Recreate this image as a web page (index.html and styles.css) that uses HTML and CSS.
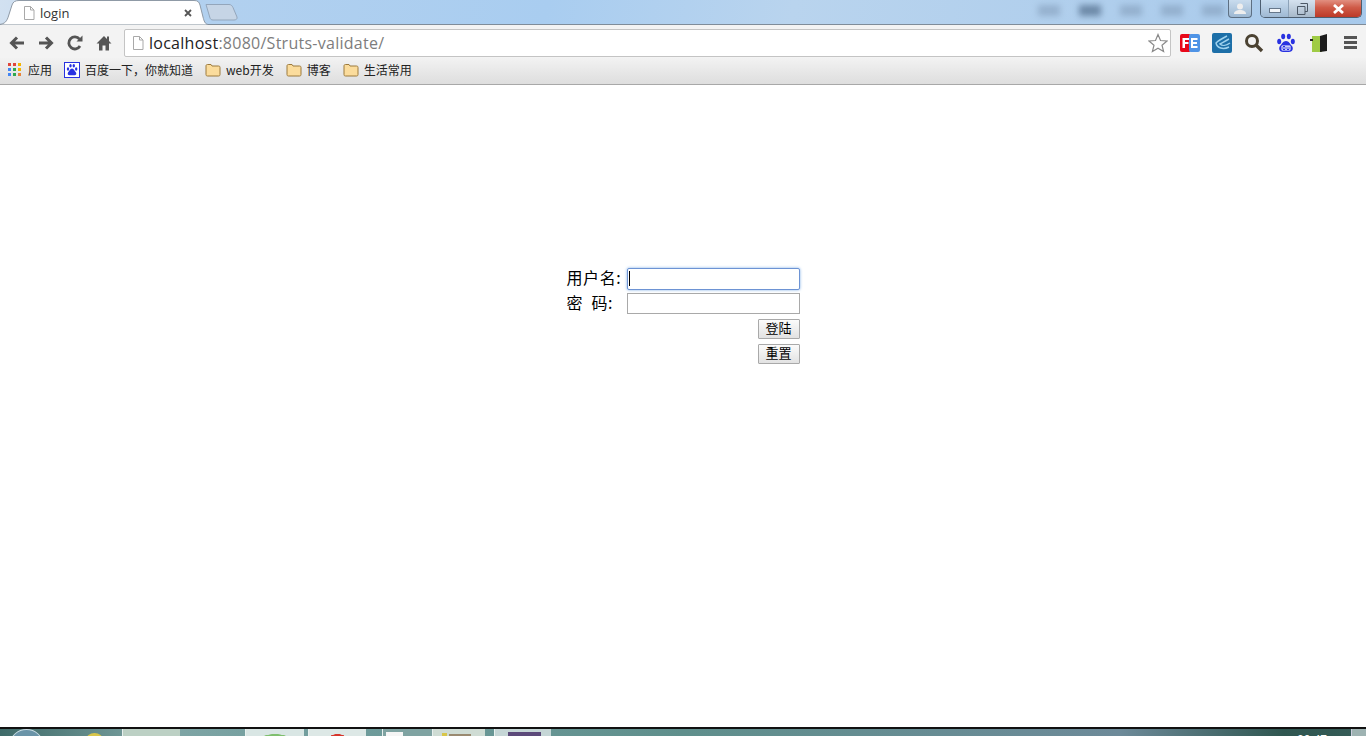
FILE: index.html
```html
<!DOCTYPE html>
<html lang="zh">
<head>
    <meta charset="UTF-8">
    <title>login</title>
    <link rel="stylesheet" href="styles.css">
</head>
<body>
    <div class="titlebar">
        <div class="tab">
            <svg class="tab-shape" width="209" height="25" viewBox="0 0 209 25">
                <path d="M0 24.5 C6 24 8 21 9.5 16 L13 5 C14 2 16 .5 20 .5 L195 .5 C199 .5 200 2 201 5 L204 17 C205 21 206 24 209 24.5" fill="#fff" stroke="#8f9aa6"/>
            </svg>
            <svg class="page-icon" width="12" height="14" viewBox="0 0 12 14">
                <path d="M1.5 .5 H7.5 L11 4 V13.5 H1.5 Z M7.5 .5 V4 H11" fill="#fff" stroke="#a9a9a9"/>
            </svg>
            <span class="tab-title">login</span>
            <svg class="tab-close" width="8" height="8" viewBox="0 0 8 8">
                <path d="M1 1 L7 7 M7 1 L1 7" stroke="#555" stroke-width="1.8"/>
            </svg>
        </div>
        <svg class="newtab" width="34" height="17" viewBox="0 0 34 17">
            <path d="M1 .5 H24 C26 .5 27 1.5 28 3.5 L32 13 C32.5 15 31 16 29 16 H8 C6 16 5.5 15 5 14 Z" fill="#c6d5e6" stroke="#94a6bb"/>
        </svg>
        <div class="blurred">
            <span class="blob"></span>
            <span class="blob dark"></span>
            <span class="blob"></span>
            <span class="blob"></span>
            <span class="blob"></span>
        </div>
        <div class="winbtn profile">
            <svg width="14" height="12" viewBox="0 0 14 12">
                <circle cx="7" cy="3.5" r="3" fill="#eee"/>
                <path d="M1 11 C1 8 4 7 7 7 C10 7 13 8 13 11 Z" fill="#eee"/>
            </svg>
        </div>
        <div class="winbtns">
            <div class="winbtn-part min"><span class="min-bar"></span></div>
            <div class="winbtn-part restore">
                <svg width="11" height="12" viewBox="0 0 11 12">
                    <path d="M3.5 .5 H10.5 V8.5 H8 M.5 3.5 H8 V11.5 H.5 Z" fill="none" stroke="#4c5866"/>
                </svg>
            </div>
            <div class="winbtn-part close">
                <svg width="13" height="10" viewBox="0 0 13 10">
                    <path d="M2 1 L11 9 M11 1 L2 9" stroke="#fff" stroke-width="2.8"/>
                </svg>
            </div>
        </div>
    </div>

    <div class="toolbar">
        <svg class="nav-icon" width="16" height="16" viewBox="0 0 16 16">
            <path d="M15 8 H3 M8 2.5 L2.5 8 L8 13.5" fill="none" stroke="#555" stroke-width="3"/>
        </svg>
        <svg class="nav-icon" width="16" height="16" viewBox="0 0 16 16">
            <path d="M1 8 H13 M8 2.5 L13.5 8 L8 13.5" fill="none" stroke="#555" stroke-width="3"/>
        </svg>
        <svg class="nav-icon" width="16" height="16" viewBox="0 0 16 16">
            <path d="M13 11 A6 6 0 1 1 12.5 4.2" fill="none" stroke="#555" stroke-width="2.8"/>
            <path d="M9.5 6.5 H15.5 V.5 Z" fill="#555"/>
        </svg>
        <svg class="nav-icon" width="16" height="16" viewBox="0 0 16 16">
            <path d="M8 1 L0.5 8.5 H3 V15.5 H6.5 V10.5 H9.5 V15.5 H13 V8.5 H15.5 L13 6 V1.5 H11 V4 Z" fill="#555"/>
        </svg>
        <div class="omnibox">
            <svg class="page-icon" width="12" height="14" viewBox="0 0 12 14">
                <path d="M1.5 .5 H7.5 L11 4 V13.5 H1.5 Z M7.5 .5 V4 H11" fill="#fff" stroke="#a9a9a9"/>
            </svg>
            <span class="url"><span class="host">localhost</span>:8080/Struts-validate/</span>
            <svg class="star" width="20" height="20" viewBox="0 0 20 20">
                <path d="M10 1.5 L12.5 7.5 L19 8 L14 12.2 L15.6 18.5 L10 15.2 L4.4 18.5 L6 12.2 L1 8 L7.5 7.5 Z" fill="#fff" stroke="#8a8a8a" stroke-width="1.2"/>
            </svg>
        </div>
        <div class="extensions">
            <svg width="20" height="20" viewBox="0 0 20 20">
                <rect x="0" y="1" width="11" height="18" rx="2" fill="#e8081a"/>
                <rect x="9" y="1" width="11" height="18" rx="2" fill="#4f94e6"/>
                <path d="M2.5 5 H9 V7 H5 V9 H8.5 V11 H5 V15 H2.5 Z M11 5 H17.5 V7 H13 V9 H17 V11 H13 V13 H17.5 V15 H11 Z" fill="#fff"/>
            </svg>
            <svg width="20" height="20" viewBox="0 0 20 20">
                <rect width="20" height="20" y="0" rx="2" fill="#1d6fa8"/>
                <path d="M15 3 C11 5 6 8 4 10 C5 15 11 17 17 14 M17 6 C13 8 10 10 8 11 C10 13 14 13 18 10" fill="none" stroke="#9fd2ee" stroke-width="1.4"/>
            </svg>
            <svg width="20" height="20" viewBox="0 0 20 20">
                <circle cx="8" cy="8" r="5.5" fill="none" stroke="#4b4232" stroke-width="3"/>
                <path d="M12 12 L18 18" stroke="#4b4232" stroke-width="3.4"/>
            </svg>
            <svg width="20" height="20" viewBox="0 0 20 20">
                <ellipse cx="3.2" cy="8.5" rx="2" ry="2.8" fill="#2932e1"/>
                <ellipse cx="7.2" cy="3.5" rx="2" ry="2.8" fill="#2932e1"/>
                <ellipse cx="12.8" cy="3.5" rx="2" ry="2.8" fill="#2932e1"/>
                <ellipse cx="16.8" cy="8.5" rx="2" ry="2.8" fill="#2932e1"/>
                <path d="M10 8 C13 8 14 11 16 13 C18 16 16 19 13 19 H7 C4 19 2 16 4 13 C6 11 7 8 10 8 Z" fill="#2932e1"/>
                <rect x="5.5" y="12.5" width="9" height="5" rx="1" fill="#fff"/>
                <path d="M7 13.5 H9 V16.5 H7 Z M11 13.5 V16.5 H13 V13.5" fill="none" stroke="#2932e1"/>
            </svg>
            <svg width="20" height="20" viewBox="0 0 20 20">
                <rect x="4" y="3" width="10" height="16" fill="#9fcb45"/>
                <path d="M12 3 L19 1 V18 L12 19 Z" fill="#1b1b1b"/>
                <rect x="2" y="6" width="3" height="2" fill="#222"/>
            </svg>
        </div>
        <div class="menu">
            <span></span><span></span><span></span>
        </div>
    </div>

    <div class="bookmarks">
        <div class="bm">
            <span class="apps">
                <i class="c1"></i><i class="c2"></i><i class="c3"></i>
                <i class="c4"></i><i class="c5"></i><i class="c6"></i>
                <i class="c7"></i><i class="c8"></i><i class="c9"></i>
            </span>
            应用
        </div>
        <div class="bm">
            <svg width="16" height="16" viewBox="0 0 16 16">
                <rect x=".5" y=".5" width="15" height="15" fill="#fff" stroke="#2932e1"/>
                <ellipse cx="4" cy="7" rx="1.2" ry="1.7" fill="#2932e1"/>
                <ellipse cx="6.5" cy="3.8" rx="1.2" ry="1.7" fill="#2932e1"/>
                <ellipse cx="9.8" cy="3.8" rx="1.2" ry="1.7" fill="#2932e1"/>
                <ellipse cx="12.2" cy="7" rx="1.2" ry="1.7" fill="#2932e1"/>
                <path d="M8 6.5 C10 6.5 10.5 9 12 10.5 C13 12.5 11.5 13.5 10 13.2 H6 C4.5 13.5 3 12.5 4 10.5 C5.5 9 6 6.5 8 6.5 Z" fill="#2932e1"/>
            </svg>
            百度一下，你就知道
        </div>
        <div class="bm">
            <svg class="folder" width="16" height="14" viewBox="0 0 16 14">
                <path d="M1 3 C1 2 1.5 1.5 2.5 1.5 H6 L7 3 H13.5 C14.5 3 15 3.5 15 4.5 V11.5 C15 12.5 14.5 13 13.5 13 H2.5 C1.5 13 1 12.5 1 11.5 Z" fill="#fbdc9c" stroke="#9c7a3c"/>
            </svg>
            web开发
        </div>
        <div class="bm">
            <svg class="folder" width="16" height="14" viewBox="0 0 16 14">
                <path d="M1 3 C1 2 1.5 1.5 2.5 1.5 H6 L7 3 H13.5 C14.5 3 15 3.5 15 4.5 V11.5 C15 12.5 14.5 13 13.5 13 H2.5 C1.5 13 1 12.5 1 11.5 Z" fill="#fbdc9c" stroke="#9c7a3c"/>
            </svg>
            博客
        </div>
        <div class="bm">
            <svg class="folder" width="16" height="14" viewBox="0 0 16 14">
                <path d="M1 3 C1 2 1.5 1.5 2.5 1.5 H6 L7 3 H13.5 C14.5 3 15 3.5 15 4.5 V11.5 C15 12.5 14.5 13 13.5 13 H2.5 C1.5 13 1 12.5 1 11.5 Z" fill="#fbdc9c" stroke="#9c7a3c"/>
            </svg>
            生活常用
        </div>
    </div>

    <div class="page">
        <form class="login-form">
            <table>
                <tr>
                    <td class="label">用户名:</td>
                    <td class="cell"><input type="text" class="field focused"><span class="caret"></span></td>
                </tr>
                <tr>
                    <td class="label">密&nbsp;&nbsp;码:</td>
                    <td class="cell"><input type="text" class="field"></td>
                </tr>
                <tr>
                    <td></td>
                    <td class="cell"><button type="submit">登陆</button></td>
                </tr>
                <tr>
                    <td></td>
                    <td class="cell"><button type="reset">重置</button></td>
                </tr>
            </table>
        </form>
    </div>

    <div class="taskbar">
        <span class="orb"></span>
        <span class="pin"></span>
        <span class="task t1"></span>
        <span class="task t2"></span>
        <span class="task t3"></span>
        <span class="task t4"></span>
        <span class="task t5"></span>
        <span class="task t6"></span>
        <span class="clock">20:47</span>
        <span class="show-desktop"></span>
    </div>
</body>
</html>
```

FILE: styles.css
```css
html, body {
    margin: 0;
    padding: 0;
    height: 100%;
}

body {
    display: flex;
    flex-direction: column;
    height: 736px;
    overflow: hidden;
    background-color: #fff;
    font-family: "Noto Sans CJK SC", "Noto Sans", sans-serif;
}

/* window title */
.titlebar {
    position: relative;
    z-index: 1;
    display: flex;
    align-items: flex-start;
    height: 25px;
    flex: none;
    box-sizing: border-box;
    background: linear-gradient(100deg, #d2e1f1 0, #b3d1ef 12%, #a9cdf0 40%, #b9d4ee 58%, #a7c9eb 100%);
    border-bottom: 1px solid #7f8c99;
}

.tab {
    position: relative;
    display: flex;
    align-items: center;
    flex: none;
    width: 205px;
    height: 25px;
    padding-left: 23px;
    box-sizing: border-box;
}

.tab-shape {
    position: absolute;
    left: -1px;
    top: 0;
}

.tab .page-icon,
.tab-title,
.tab-close {
    position: relative;
}

.tab-title {
    margin-left: 5px;
    font-family: "Open Sans", sans-serif;
    font-size: 13px;
    color: #333;
}

.tab-close {
    margin-left: auto;
    margin-right: 13px;
}

.newtab {
    flex: none;
    margin: 4px 0 0 0;
}

.blurred {
    display: flex;
    gap: 19px;
    margin: 5px 0 0 auto;
}

.blob {
    width: 22px;
    height: 11px;
    background-color: #7f99b6;
    opacity: .55;
    filter: blur(3px);
}

.blob.dark {
    background-color: #5c7896;
    opacity: .8;
}

.winbtn {
    display: flex;
    align-items: center;
    justify-content: center;
    box-sizing: border-box;
    flex: none;
    width: 24px;
    height: 18px;
    margin-left: 4px;
    background: linear-gradient(#c9dcee, #9db8d2);
    border: 1px solid #5d6f82;
    border-top: 0;
    border-radius: 0 0 4px 4px;
}

.winbtns {
    display: flex;
    flex: none;
    height: 18px;
    margin: 0 4px 0 8px;
    border: 1px solid #4d5e70;
    border-top: 0;
    border-radius: 0 0 5px 5px;
    overflow: hidden;
    box-sizing: border-box;
    width: 102px;
}

.winbtn-part {
    display: flex;
    align-items: center;
    justify-content: center;
    height: 100%;
}

.min {
    width: 28px;
    background: linear-gradient(#c8dcef, #9fb9d3);
    border-right: 1px solid #8da3b9;
    box-sizing: border-box;
}

.min-bar {
    width: 12px;
    height: 5px;
    margin-top: 4px;
    background-color: #f1f5f9;
    border: 1px solid #66778a;
    box-sizing: border-box;
}

.restore {
    width: 26px;
    background: linear-gradient(#d5e2ef, #a8b9ca);
}

.close {
    flex: 1;
    background: linear-gradient(#e28f80 0, #cf5a47 45%, #bc3a28 100%);
}

/* toolbar */
.toolbar {
    display: flex;
    align-items: center;
    flex: none;
    height: 33px;
    padding: 2px 0 0 9px;
    background-color: #f3f3f3;
    box-sizing: border-box;
}

.nav-icon {
    flex: none;
    margin-right: 13px;
}

.omnibox {
    display: flex;
    align-items: center;
    box-sizing: border-box;
    flex: none;
    width: 1047px;
    height: 28px;
    margin-left: -1px;
    padding: 0 2px 0 7px;
    background-color: #fff;
    border: 1px solid #c4c4c4;
    border-radius: 2px;
}

.url {
    margin-left: 5px;
    font-family: "Open Sans", sans-serif;
    font-size: 16px;
    letter-spacing: .26px;
    color: #7d7d7d;
}

.host {
    color: #222;
}

.star {
    margin-left: auto;
}

.extensions {
    display: flex;
    gap: 12px;
    margin-left: 9px;
}

.menu {
    display: flex;
    flex-direction: column;
    gap: 2px;
    margin-left: 16px;
}

.menu span {
    display: block;
    width: 13px;
    height: 3px;
    background-color: #555;
}

/* bookmarks */
.bookmarks {
    display: flex;
    align-items: center;
    flex: none;
    gap: 12px;
    height: 27px;
    padding: 0 0 3px 8px;
    box-sizing: border-box;
    background: linear-gradient(#f2f2f2, #dedede);
    border-bottom: 1px solid #a8a8a8;
}

.bm {
    display: flex;
    align-items: center;
    gap: 5px;
    font-size: 12px;
    color: #222;
}

.apps {
    display: grid;
    grid-template-columns: repeat(3, 3px);
    grid-auto-rows: 3px;
    gap: 2px;
    width: 13px;
    margin-right: 2px;
}

.apps i { display: block; }
.c1 { background-color: #e0453a; }
.c2 { background-color: #e0453a; }
.c3 { background-color: #f4b400; }
.c4 { background-color: #4285f4; }
.c5 { background-color: #2fa84f; }
.c6 { background-color: #f4b400; }
.c7 { background-color: #4285f4; }
.c8 { background-color: #2fa84f; }
.c9 { background-color: #e8833a; }

/* login form */
.page {
    flex: 1;
    display: flex;
    justify-content: center;
    padding-top: 181px;
    background-color: #fff;
}

.login-form {
    margin-left: -1px;
}

table {
    border-collapse: separate;
    border-spacing: 2px;
}

td {
    height: 23px;
    padding: 0 1px;
    vertical-align: top;
}

.label {
    width: 56px;
    padding-left: 2px;
    font-size: 16px;
    line-height: 18px;
    letter-spacing: .6px;
    color: #000;
    white-space: nowrap;
}

.cell {
    position: relative;
}

.field {
    display: block;
    box-sizing: border-box;
    width: 173px;
    height: 21px;
    margin: 0;
    padding: 1px 2px;
    background-color: #fff;
    border: 1px solid #a9a9a9;
    outline: none;
}

.field.focused {
    height: 22px;
    border: 1px solid #6d93d4;
    box-shadow: 0 0 3px #7eaee6;
    border-radius: 2px;
}

.caret {
    position: absolute;
    left: 3px;
    top: 3px;
    width: 1px;
    height: 15px;
    background-color: #000;
}

button {
    display: block;
    box-sizing: border-box;
    width: 42px;
    height: 20px;
    margin: 1px 0 0 auto;
    padding: 0 0 2px;
    font-family: "Noto Sans CJK SC", sans-serif;
    font-size: 13px;
    line-height: 16px;
    color: #000;
    background: linear-gradient(#fbfbfb, #e2e2e2);
    border: 1px solid #a9a9a9;
    border-radius: 1px;
}

/* desktop taskbar, mostly cut off */
.taskbar {
    display: flex;
    align-items: flex-start;
    flex: none;
    height: 9px;
    box-sizing: border-box;
    overflow: hidden;
    padding-left: 10px;
    background: linear-gradient(90deg, #3f6b69 0, #7fa5a5 12%, #6f9c9c 25%, #5f8f8c 50%, #6d8a99 82%, #2f5650 94%, #365d58 100%);
    border-top: 2px solid #111;
}

.orb {
    flex: none;
    width: 33px;
    height: 30px;
    border-radius: 50%;
    background-color: #6a94a8;
    border: 1px solid #c8dce4;
    box-sizing: border-box;
}

.pin {
    flex: none;
    width: 17px;
    height: 14px;
    margin: 4px 0 0 43px;
    border-radius: 50%;
    background-color: #d8c64a;
}

.task {
    flex: none;
    width: 58px;
    height: 9px;
    background-color: #c9dcd8;
    border-left: 1px solid #e8f0ee;
    box-sizing: border-box;
}

.t1 { margin-left: 19px; background-color: #bcd0c4; }
.t2 { margin-left: 65px; width: 59px; background: radial-gradient(ellipse 14px 4px at 50% 100%, #7fbf6e 0 90%, #d9e6e4 100%); }
.t3 { margin-left: 4px; background: radial-gradient(ellipse 9px 4px at 50% 100%, #d6352b 0 90%, #dde8e6 100%); }
.t4 { margin-left: 16px; width: 50px; background: linear-gradient(#f5f5f5, #f5f5f5) 3px 3px / 17px 6px no-repeat, #7fa3a2; }
.t5 { width: 53px; background: linear-gradient(#d8c64a, #d8c64a) 9px 4px / 5px 5px no-repeat, linear-gradient(#9a8a70, #9a8a70) 16px 5px / 22px 4px no-repeat, #cfdcd4; }
.t6 { margin-left: 9px; width: 57px; background: linear-gradient(#5c4a7a, #5c4a7a) 13px 3px / 33px 6px no-repeat, #c5d6d6; }

.clock {
    margin: 4px 0 0 auto;
    padding-right: 24px;
    font-family: "Liberation Sans", sans-serif;
    font-size: 12px;
    line-height: 14px;
    color: #fff;
}

.show-desktop {
    flex: none;
    width: 14px;
    height: 9px;
    background-color: #9eb3b2;
    border-left: 1px solid #ccd;
}
```
